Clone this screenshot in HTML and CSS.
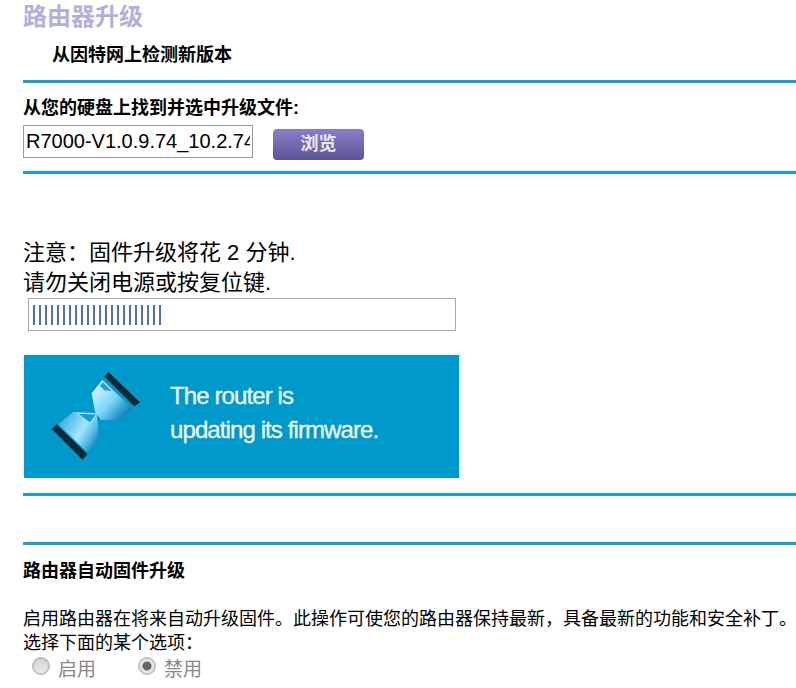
FILE: index.html
```html
<!DOCTYPE html>
<html lang="zh-CN">
<head>
    <meta charset="UTF-8">
    <title>路由器升级</title>
    <link rel="stylesheet" href="styles.css">
</head>
<body>
    <h1 class="page-title">路由器升级</h1>
    <div class="check-online">从因特网上检测新版本</div>
    <div class="rule"></div>

    <div class="file-label">从您的硬盘上找到并选中升级文件:</div>
    <div class="file-row">
        <input type="text" class="file-input" value="R7000-V1.0.9.74_10.2.74">
        <button class="btn-browse">浏览</button>
    </div>
    <div class="rule rule-file"></div>

    <div class="notice">
        <div>注意：固件升级将花 2 分钟.</div>
        <div>请勿关闭电源或按复位键.</div>
    </div>
    <div class="progress">
        <i></i><i></i><i></i><i></i><i></i><i></i><i></i>
        <i></i><i></i><i></i><i></i><i></i><i></i><i></i>
        <i></i><i></i><i></i><i></i><i></i><i></i><i></i><i></i>
    </div>

    <div class="banner">
        <svg class="hourglass" viewBox="-63 -30 420 369" width="140" height="123">
            <defs>
                <linearGradient id="glassTop" x1="0.1" y1="0.25" x2="0.9" y2="0.95">
                    <stop offset="0" stop-color="#c6f1fd"/>
                    <stop offset="0.45" stop-color="#7fd6f6"/>
                    <stop offset="0.75" stop-color="#2f9fd2"/>
                    <stop offset="1" stop-color="#126c98"/>
                </linearGradient>
                <linearGradient id="glassBottom" x1="0" y1="0.2" x2="1" y2="0.8">
                    <stop offset="0" stop-color="#2fa9e0"/>
                    <stop offset="0.55" stop-color="#a6e6fb"/>
                    <stop offset="0.8" stop-color="#49b6e2"/>
                    <stop offset="1" stop-color="#137cab"/>
                </linearGradient>
            </defs>
            <polygon points="172,45 140,85 150,140 168,165 225,165 262,130" fill="url(#glassTop)"/>
            <polygon points="174,52 200,78 178,76 164,62" fill="#2a9ed2"/>
            <polygon points="85,140 155,145 160,190 160,225 125,260 40,178" fill="url(#glassBottom)"/>
            <polygon points="96,145 155,147 135,174" fill="#159fd6" stroke="#d8f6ff" stroke-width="2"/>
            <polygon points="190,22 283,112 268,123 180,35" fill="#0e2838" stroke="#0e2838" stroke-width="3" stroke-linejoin="round"/>
            <polygon points="35,180 126,268 112,283 22,192" fill="#0e2838" stroke="#0e2838" stroke-width="3" stroke-linejoin="round"/>
        </svg>
        <div class="banner-text">The router is<br>updating its firmware.</div>
    </div>
    <div class="rule rule-banner"></div>
    <div class="rule rule-auto"></div>

    <div class="auto-title">路由器自动固件升级</div>
    <p class="auto-desc">启用路由器在将来自动升级固件。此操作可使您的路由器保持最新，具备最新的功能和安全补丁。<br>选择下面的某个选项：</p>
    <div class="options">
        <label class="option"><input type="radio" name="auto" disabled>启用</label>
        <label class="option"><input type="radio" name="auto" checked disabled>禁用</label>
    </div>
</body>
</html>
```

FILE: styles.css
```css
* {
    margin: 0;
    padding: 0;
    box-sizing: border-box;
}

html, body {
    height: 688px;
    overflow: hidden;
}

body {
    font-family: 'Liberation Sans', 'Noto Sans CJK SC', sans-serif;
    background: #fff;
    color: #000;
    padding-left: 23px;
}

.page-title {
    font-size: 24px;
    line-height: 34px;
    font-weight: bold;
    color: #b4aedb;
}

.check-online {
    font-size: 18px;
    line-height: 24px;
    font-weight: bold;
    margin-top: 9px;
    padding-left: 29px;
}

.rule {
    height: 3px;
    background: #1a9fd0;
}

.check-online + .rule {
    margin-top: 13px;
}

.file-label {
    font-size: 18px;
    line-height: 24px;
    font-weight: bold;
    margin-top: 13px;
}

.file-row {
    display: flex;
    align-items: flex-start;
    gap: 20px;
    margin-top: 5px;
}

.file-input {
    width: 230px;
    height: 33px;
    border: 1px solid #999;
    font-family: inherit;
    font-size: 20px;
    padding: 0 2px 0 2px;
    color: #000;
}

.btn-browse {
    width: 91px;
    height: 31px;
    margin-top: 4px;
    padding-bottom: 5px;
    border: none;
    border-radius: 4px;
    background: linear-gradient(#8a7fcb, #5c5397);
    color: #ece9f8;
    font-family: inherit;
    font-size: 18px;
    font-weight: bold;
}

.rule-file {
    margin-top: 11px;
}

.notice {
    font-size: 22px;
    line-height: 30px;
    margin-top: 64px;
}

.progress {
    width: 428px;
    height: 33px;
    margin: 0 0 0 5px;
    border: 1px solid #aaa;
    display: flex;
    align-items: center;
    gap: 4px;
    padding-left: 4px;
}

.progress i {
    width: 2px;
    height: 20px;
    background: #4a6fd4;
}

.banner {
    width: 435px;
    height: 123px;
    margin: 24px 0 0 1px;
    background: #0099cc;
    display: flex;
}

.hourglass {
    flex: none;
    filter: blur(0.4px);
}

.banner-text {
    margin: 24px 0 0 6px;
    font-size: 24px;
    line-height: 34px;
    letter-spacing: -0.9px;
    color: #eefaff;
    -webkit-text-stroke: 0.3px #eefaff;
}

.rule-banner {
    margin-top: 15px;
}

.rule-auto {
    margin-top: 46px;
}

.auto-title {
    font-size: 18px;
    line-height: 24px;
    font-weight: bold;
    margin-top: 14px;
}

.auto-desc {
    font-size: 18px;
    line-height: 24px;
    margin-top: 24px;
    white-space: nowrap;
}

.options {
    display: flex;
    margin-top: 2px;
    padding-left: 9px;
    color: #888;
    font-size: 19px;
    line-height: 26px;
}

.option {
    display: flex;
    align-items: flex-start;
    width: 106px;
}

.option input {
    appearance: none;
    width: 18px;
    height: 18px;
    margin: 0 8px 0 0;
    border: 1px solid #b5b5b5;
    border-radius: 50%;
    background: linear-gradient(#d2d2d2, #ececec);
    box-shadow: inset 0 0 2px #999;
}

.option input:checked {
    background: radial-gradient(circle, #666 0 4px, #e8e8e8 5px);
}
```
